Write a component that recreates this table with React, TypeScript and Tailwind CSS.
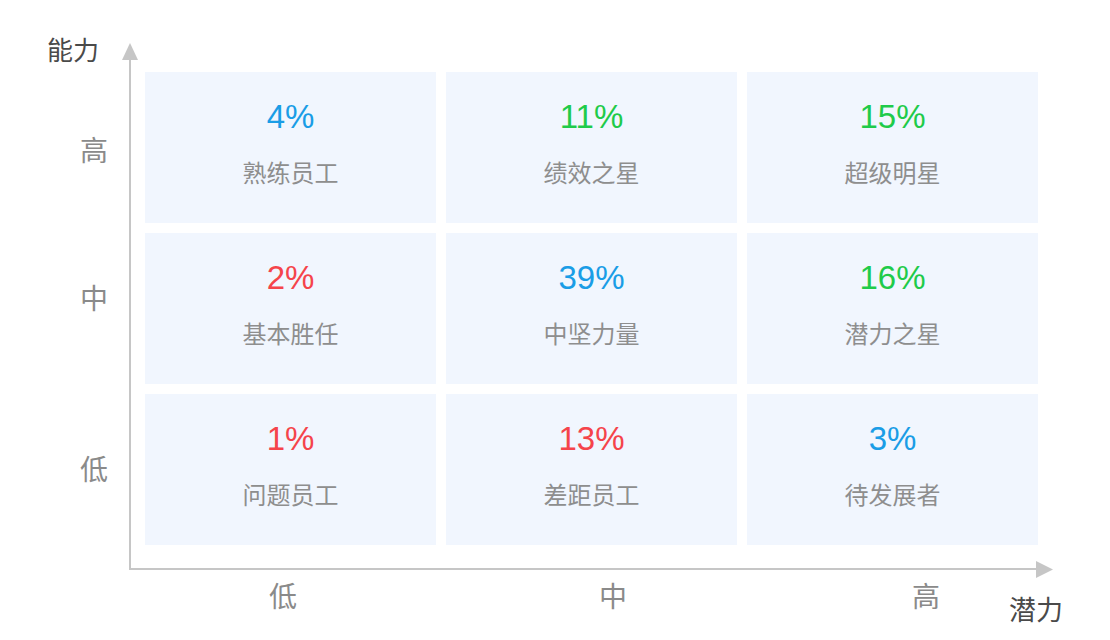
const cells = [
  { value: "4%", label: "熟练员工", color: "text-[#1a9de6]" },
  { value: "11%", label: "绩效之星", color: "text-[#1fcb4a]" },
  { value: "15%", label: "超级明星", color: "text-[#1fcb4a]" },
  { value: "2%", label: "基本胜任", color: "text-[#f5444b]" },
  { value: "39%", label: "中坚力量", color: "text-[#1a9de6]" },
  { value: "16%", label: "潜力之星", color: "text-[#1fcb4a]" },
  { value: "1%", label: "问题员工", color: "text-[#f5444b]" },
  { value: "13%", label: "差距员工", color: "text-[#f5444b]" },
  { value: "3%", label: "待发展者", color: "text-[#1a9de6]" },
];

const font = "font-['Liberation_Sans','Noto_Sans_CJK_SC',sans-serif]";

export default function App() {
  return (
    <div className={`h-[640px] w-[1110px] overflow-hidden bg-white ${font}`}>
      <div className="flex pt-[36px]">
        {/* Y axis labels */}
        <div className="flex w-[129px] flex-col">
          <div className="ml-[47px] mt-[2px] text-[26px] leading-none text-[#4a4a4a]">能力</div>
          <div className="ml-[80px] mt-[74px] text-[28px] leading-none text-[#8a8a8a]">高</div>
          <div className="ml-[80px] mt-[120px] text-[28px] leading-none text-[#8a8a8a]">中</div>
          <div className="ml-[80px] mt-[143px] text-[28px] leading-none text-[#8a8a8a]">低</div>
        </div>

        {/* Chart */}
        <div className="relative mt-[24px] w-[916px] border-b-2 border-l-2 border-[#c6c6c6] pb-[23px] pl-[14px] pt-[12px]">
          <svg
            className="absolute left-[-9px] top-[-17px]"
            width="16"
            height="17"
            viewBox="0 0 16 17"
          >
            <polygon points="8,0 16,17 0,17" fill="#c6c6c6" />
          </svg>
          <svg
            className="absolute bottom-[-10px] left-[905px]"
            width="17"
            height="17"
            viewBox="0 0 17 17"
          >
            <polygon points="0,0 17,8.5 0,17" fill="#c6c6c6" />
          </svg>

          <div className="grid w-[893px] grid-cols-3 gap-[10px]">
            {cells.map((c) => (
              <div
                key={c.label}
                className="flex h-[151px] flex-col items-center bg-[#f1f6fe] pt-[28px]"
              >
                <div className={`text-[33px] leading-none ${c.color}`}>{c.value}</div>
                <div className="mt-[29px] text-[24px] leading-none text-[#8e8e8e]">
                  {c.label}
                </div>
              </div>
            ))}
          </div>
        </div>
      </div>

      {/* X axis labels */}
      <div className="mt-[14px] flex items-start text-[28px] leading-none text-[#8a8a8a]">
        <div className="ml-[269px]">低</div>
        <div className="ml-[302px]">中</div>
        <div className="ml-[285px]">高</div>
        <div className="ml-[69px] mt-[14px] text-[27px] text-[#4a4a4a]">潜力</div>
      </div>
    </div>
  );
}
